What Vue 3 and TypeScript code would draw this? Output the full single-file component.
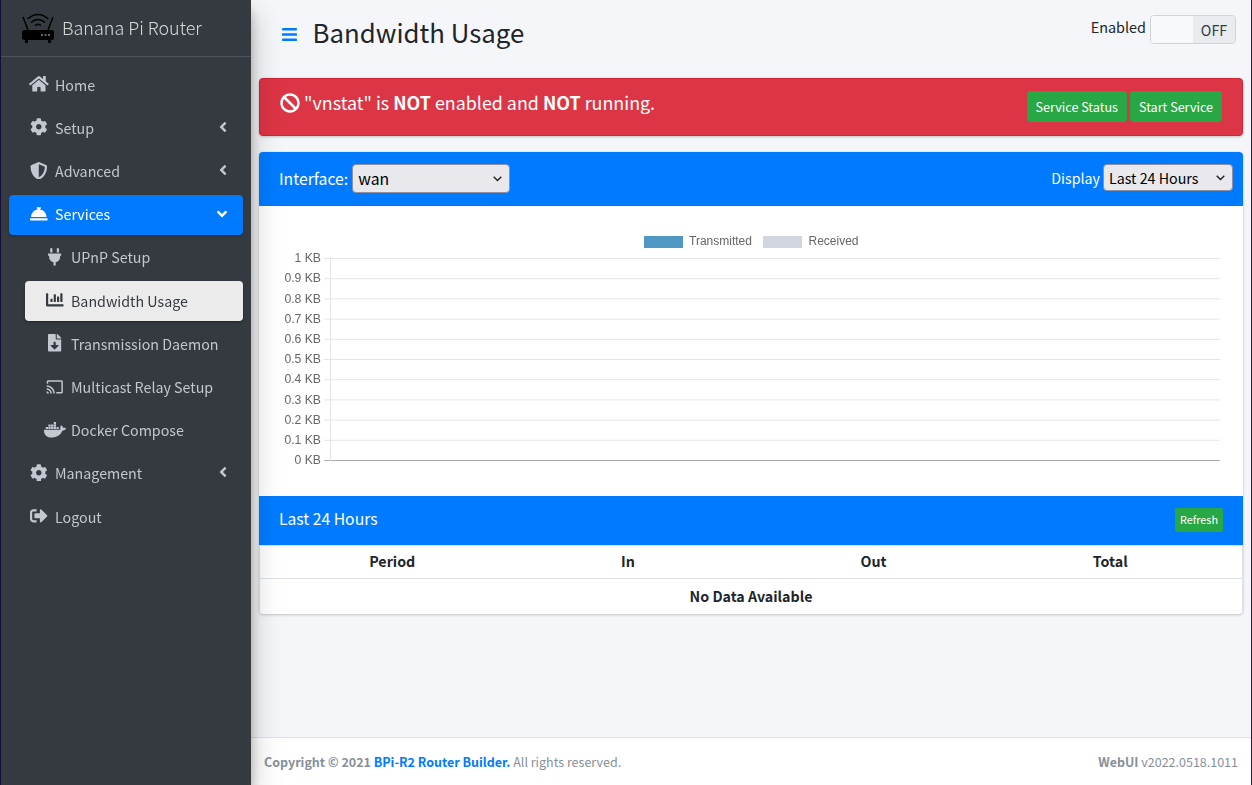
<script setup lang="ts">
import { computed } from 'vue'

const icons: Record<string, { box: string; d: string }> = {
  home: { box: '0 0 576 512', d: 'M280.37 148.26L96 300.11V464a16 16 0 0 0 16 16l112.06-.29a16 16 0 0 0 15.92-16V368a16 16 0 0 1 16-16h64a16 16 0 0 1 16 16v95.64a16 16 0 0 0 16 16.05L464 480a16 16 0 0 0 16-16V300L295.67 148.26a12.19 12.19 0 0 0-15.3 0zM571.6 251.47L488 182.56V44.05a12 12 0 0 0-12-12h-56a12 12 0 0 0-12 12v72.61L318.47 43a48 48 0 0 0-61 0L4.34 251.47a12 12 0 0 0-1.6 16.9l25.5 31A12 12 0 0 0 45.15 301l235.22-193.74a12.19 12.19 0 0 1 15.3 0L530.9 301a12 12 0 0 0 16.9-1.6l25.5-31a12 12 0 0 0-1.7-16.93z' },
  cog: { box: '0 0 512 512', d: 'M487.4 315.7l-42.6-24.6c4.3-23.2 4.3-47 0-70.2l42.6-24.6c4.9-2.8 7.1-8.6 5.5-14-11.1-35.6-30-67.8-54.7-94.6-3.8-4.1-10-5.1-14.8-2.3L380.8 110c-17.9-15.4-38.5-27.3-60.8-35.1V25.8c0-5.6-3.9-10.5-9.4-11.7-36.7-8.2-74.3-7.8-109.2 0-5.5 1.2-9.4 6.1-9.4 11.7V75c-22.2 7.9-42.8 19.8-60.8 35.1L88.7 85.5c-4.9-2.8-11-1.9-14.8 2.3-24.7 26.7-43.6 58.9-54.7 94.6-1.7 5.4.6 11.2 5.5 14L67.3 221c-4.3 23.2-4.3 47 0 70.2l-42.6 24.6c-4.9 2.8-7.1 8.6-5.5 14 11.1 35.6 30 67.8 54.7 94.6 3.8 4.1 10 5.1 14.8 2.3l42.6-24.6c17.9 15.4 38.5 27.3 60.8 35.1v49.2c0 5.6 3.9 10.5 9.4 11.7 36.7 8.2 74.3 7.8 109.2 0 5.5-1.2 9.4-6.1 9.4-11.7v-49.2c22.2-7.9 42.8-19.8 60.8-35.1l42.6 24.6c4.9 2.8 11 1.9 14.8-2.3 24.7-26.7 43.6-58.9 54.7-94.6 1.5-5.5-.7-11.3-5.6-14.1zM256 336c-44.1 0-80-35.9-80-80s35.9-80 80-80 80 35.9 80 80-35.9 80-80 80z' },
  shield: { box: '0 0 512 512', d: 'M466.5 83.7l-192-80a48.15 48.15 0 0 0-36.9 0l-192 80C27.7 91.1 16 108.6 16 128c0 198.5 114.5 335.7 221.5 380.3 11.8 4.9 25.1 4.9 36.9 0C360.1 472.6 496 349.3 496 128c0-19.4-11.7-36.9-29.5-44.3zM256.1 446.3l-.1-381 175.9 73.3c-3.3 151.4-82.1 261.1-175.8 307.7z' },
  bell: { box: '0 0 512 512', d: 'M288 130.54V112h16c8.84 0 16-7.16 16-16V80c0-8.84-7.16-16-16-16h-96c-8.84 0-16 7.16-16 16v16c0 8.84 7.16 16 16 16h16v18.54C115.49 146.11 32 239.18 32 352h448c0-112.82-83.49-205.89-192-221.46zM496 384H16c-8.84 0-16 7.16-16 16v32c0 8.84 7.16 16 16 16h480c8.84 0 16-7.16 16-16v-32c0-8.84-7.16-16-16-16z' },
  plug: { box: '0 0 384 512', d: 'M320 32a32 32 0 0 0-64 0v96h64Zm48 128H16A16 16 0 0 0 0 176v32a16 16 0 0 0 16 16H32v32A160.07 160.07 0 0 0 160 412.8V512h64V412.8A160.07 160.07 0 0 0 352 256V224h16a16 16 0 0 0 16-16V176A16 16 0 0 0 368 160ZM128 32a32 32 0 0 0-64 0v96h64Z' },
  chart: { box: '0 0 512 512', d: 'M332.8 320h38.4c6.4 0 12.8-6.4 12.8-12.8V172.8c0-6.4-6.4-12.8-12.8-12.8h-38.4c-6.4 0-12.8 6.4-12.8 12.8v134.4c0 6.4 6.4 12.8 12.8 12.8zm96 0h38.4c6.4 0 12.8-6.4 12.8-12.8V76.8c0-6.4-6.4-12.8-12.8-12.8h-38.4c-6.4 0-12.8 6.4-12.8 12.8v230.4c0 6.4 6.4 12.8 12.8 12.8zm-288 0h38.4c6.4 0 12.8-6.4 12.8-12.8v-70.4c0-6.4-6.4-12.8-12.8-12.8h-38.4c-6.4 0-12.8 6.4-12.8 12.8v70.4c0 6.4 6.4 12.8 12.8 12.8zm96 0h38.4c6.4 0 12.8-6.4 12.8-12.8V108.8c0-6.4-6.4-12.8-12.8-12.8h-38.4c-6.4 0-12.8 6.4-12.8 12.8v198.4c0 6.4 6.4 12.8 12.8 12.8zM496 384H64V80c0-8.84-7.16-16-16-16H16C7.16 64 0 71.16 0 80v336c0 17.67 14.33 32 32 32h464c8.84 0 16-7.16 16-16v-32c0-8.84-7.16-16-16-16z' },
  file: { box: '0 0 384 512', d: 'M224 136V0H24C10.7 0 0 10.7 0 24v464c0 13.3 10.7 24 24 24h336c13.3 0 24-10.7 24-24V160H248c-13.2 0-24-10.8-24-24zm76.45 211.36l-96.42 95.7c-6.65 6.61-17.39 6.61-24.04 0l-96.42-95.7C73.42 337.29 80.54 320 94.82 320H160v-80c0-8.84 7.16-16 16-16h32c8.84 0 16 7.16 16 16v80h65.18c14.28 0 21.4 17.29 11.27 27.36zM377 105L279.1 7c-4.5-4.5-10.6-7-17-7H256v128h128v-6.1c0-6.3-2.5-12.4-7-16.9z' },
  cast: { box: '0 0 512 512', d: 'M447.8 64H64c-23.6 0-42.7 19.1-42.7 42.7v63.9H64v-63.9h383.8v298.6H298.6V448H448c23.6 0 42.7-19.1 42.7-42.7V106.7C490.7 83.1 471.4 64 447.8 64zM21.3 383.6v63.9h63.9c0-35.3-28.6-63.9-63.9-63.9zm0-85V341c58.9 0 106.6 48.1 106.6 107h42.7c.1-82.4-66.9-149.3-149.3-149.4zm192.1 149.4h42.7c-.5-129.5-105.3-234.3-234.8-234.6v42.4c106 -.2 192 86.2 192.1 192.2z' },
  docker: { box: '0 0 640 512', d: 'M349.9 236.3h-66.1v-59.4h66.1v59.4zm0-204.3h-66.1v60.7h66.1V32zm78.2 144.8H362v59.4h66.1v-59.4zm-156.3-72.1h-66.1v60.1h66.1v-60.1zm78.1 0h-66.1v60.1h66.1v-60.1zm276.8 100c-14.4-9.7-47.6-13.2-73.1-8.4-3.3-24-16.7-44.9-41.1-63.7l-14-9.3-9.3 14c-18.4 27.8-23.4 73.6-3.7 103.8-8.7 4.7-25.8 11.1-48.4 10.7H2.4c-8.7 50.8 5.8 116.8 44 162.1 37.1 43.9 92.7 66.2 165.4 66.2 157.4 0 273.9-72.5 328.4-204.2 21.4.4 67.6.1 91.3-45.2 1.5-2.5 6.6-13.2 8.5-17.1l-13.3-8.9zm-511.1-27.9h-66v59.4h66.1v-59.4zm78.1 0h-66.1v59.4h66.1v-59.4zm78.1 0h-66.1v59.4h66.1v-59.4zm-78.1-72.1h-66.1v60.1h66.1v-60.1z' },
  logout: { box: '0 0 512 512', d: 'M497 273L329 441c-15 15-41 4.5-41-17v-96H152c-13.3 0-24-10.7-24-24v-96c0-13.3 10.7-24 24-24h136V88c0-21.4 25.9-32 41-17l168 168c9.3 9.4 9.3 24.6 0 34zM192 436v-40c0-6.6-5.4-12-12-12H96c-17.7 0-32-14.3-32-32V160c0-17.7 14.3-32 32-32h84c6.6 0 12-5.4 12-12V76c0-6.6-5.4-12-12-12H96c-53 0-96 43-96 96v192c0 53 43 96 96 96h84c6.6 0 12-5.4 12-12z' },
}

const angleLeft = 'M31.7 239l136-136c9.4-9.4 24.6-9.4 33.9 0l22.6 22.6c9.4 9.4 9.4 24.6 0 33.9L127.9 256l96.4 96.4c9.4 9.4 9.4 24.6 0 33.9L201.7 409c-9.4 9.4-24.6 9.4-33.9 0l-136-136c-9.5-9.4-9.5-24.6-.1-34z'
const angleDown = 'M143 352.3L7 216.3c-9.4-9.4-9.4-24.6 0-33.9l22.6-22.6c9.4-9.4 24.6-9.4 33.9 0l96.4 96.4 96.4-96.4c9.4-9.4 24.6-9.4 33.9 0l22.6 22.6c9.4 9.4 9.4 24.6 0 33.9l-136 136c-9.2 9.4-24.4 9.4-33.8 0z'

type NavItem = { label: string; icon: string; arrow?: 'left' | 'down'; sub?: boolean; active?: boolean; current?: boolean }

const nav: NavItem[] = [
  { label: 'Home', icon: 'home' },
  { label: 'Setup', icon: 'cog', arrow: 'left' },
  { label: 'Advanced', icon: 'shield', arrow: 'left' },
  { label: 'Services', icon: 'bell', arrow: 'down', active: true },
  { label: 'UPnP Setup', icon: 'plug', sub: true },
  { label: 'Bandwidth Usage', icon: 'chart', sub: true, current: true },
  { label: 'Transmission Daemon', icon: 'file', sub: true },
  { label: 'Multicast Relay Setup', icon: 'cast', sub: true },
  { label: 'Docker Compose', icon: 'docker', sub: true },
  { label: 'Management', icon: 'cog', arrow: 'left' },
  { label: 'Logout', icon: 'logout' },
]

// y axis of the empty traffic chart
const ticks = computed(() =>
  ['1 KB', '0.9 KB', '0.8 KB', '0.7 KB', '0.6 KB', '0.5 KB', '0.4 KB', '0.3 KB', '0.2 KB', '0.1 KB', '0 KB'].map((label, i) => ({
    label,
    y: 52.5 + i * 20.2,
  })),
)
</script>

<template>
  <div class="page">
    <aside class="sidebar">
      <div class="brand">
        <svg class="logo" viewBox="0 0 32 30" fill="none">
          <path d="M6 17 1 4M26 17l5-13" stroke="#000" stroke-width="1.5" />
          <path d="M5.5 6Q16-3 26.5 6M9 9.5Q16 3.5 23 9.5M13 12.6Q16 10 19 12.6" stroke="#000" stroke-width="1.5" />
          <rect x="0" y="17" width="32" height="10" rx="2.5" fill="#000" />
          <path d="M3 27h3v3H3zM26 27h3v3h-3z" fill="#000" />
          <path d="M19 21h2v2h-2zM22.5 21h2v2h-2zM26 21h2v2h-2z" fill="#666" />
        </svg>
        <span class="brand-text">Banana Pi Router</span>
      </div>
      <nav class="nav">
        <a
          v-for="item in nav"
          :key="item.label"
          class="nav-link"
          :class="{ sub: item.sub, active: item.active, current: item.current }"
        >
          <span class="nav-icon">
            <svg :viewBox="icons[item.icon].box" :class="'i-' + item.icon"><path :d="icons[item.icon].d" /></svg>
          </span>
          <span class="nav-label">{{ item.label }}</span>
          <svg v-if="item.arrow === 'left'" class="arrow" viewBox="0 0 256 512"><path :d="angleLeft" /></svg>
          <svg v-if="item.arrow === 'down'" class="arrow down" viewBox="0 0 320 512"><path :d="angleDown" /></svg>
        </a>
      </nav>
    </aside>

    <div class="main">
      <div class="content">
        <header class="topbar">
          <svg class="burger" viewBox="0 0 448 512"><path d="M16 132h416c8.837 0 16-7.163 16-16V76c0-8.837-7.163-16-16-16H16C7.163 60 0 67.163 0 76v40c0 8.837 7.163 16 16 16zm0 160h416c8.837 0 16-7.163 16-16v-40c0-8.837-7.163-16-16-16H16c-8.837 0-16 7.163-16 16v40c0 8.837 7.163 16 16 16zm0 160h416c8.837 0 16-7.163 16-16v-40c0-8.837-7.163-16-16-16H16c-8.837 0-16 7.163-16 16v40c0 8.837 7.163 16 16 16z" /></svg>
          <h1>Bandwidth Usage</h1>
          <div class="enabled">
            <span class="enabled-label">Enabled</span>
            <div class="toggle"><span class="toggle-blank"></span><span class="toggle-off">OFF</span></div>
          </div>
        </header>

        <div class="alert">
          <p class="alert-text">
            <svg class="ban" viewBox="0 0 512 512"><path d="M256 8C119.034 8 8 119.033 8 256s111.034 248 248 248 248-111.034 248-248S392.967 8 256 8zm130.108 117.892c65.448 65.448 70 165.481 20.677 235.637L150.47 105.216c70.204-49.356 170.226-44.735 235.638 20.676zM125.892 386.108c-65.448-65.448-70-165.481-20.677-235.637L361.53 406.784c-70.203 49.356-170.226 44.736-235.638-20.676z" /></svg>
            "vnstat" is <b>NOT</b> enabled and <b>NOT</b> running.
          </p>
          <div class="alert-btns">
            <button class="btn">Service Status</button>
            <button class="btn">Start Service</button>
          </div>
        </div>

        <section class="card">
          <div class="card-head graph-head">
            <label class="field">Interface: <select class="sel sel-if"><option>wan</option></select></label>
            <label class="field small">Display <select class="sel sel-range"><option>Last 24 Hours</option></select></label>
          </div>
          <div class="chart-wrap">
            <svg class="chart" viewBox="0 0 983 290">
              <rect x="385" y="30" width="39" height="12" fill="#4f98c3" />
              <text x="430" y="39" class="legend">Transmitted</text>
              <rect x="504" y="30" width="39" height="12" fill="#d2d6de" />
              <text x="549.5" y="39" class="legend">Received</text>
              <g v-for="t in ticks" :key="t.label">
                <line x1="65" :x2="961" :y1="t.y" :y2="t.y" :stroke="t.label === '0 KB' ? '#aaa' : '#e5e5e5'" />
                <text x="62" :y="t.y + 3.6" class="tick" text-anchor="end">{{ t.label }}</text>
              </g>
              <line x1="71.5" x2="71.5" y1="52" y2="255" stroke="#e5e5e5" />
            </svg>
          </div>
          <div class="card-head table-head">
            <span class="table-title">Last 24 Hours</span>
            <button class="btn btn-xs">Refresh</button>
          </div>
          <table class="tbl">
            <thead>
              <tr><th class="c1">Period</th><th class="c2">In</th><th class="c3">Out</th><th class="c4">Total</th></tr>
            </thead>
            <tbody>
              <tr><td colspan="4">No Data Available</td></tr>
            </tbody>
          </table>
        </section>
      </div>

      <footer class="footer">
        <span><b>Copyright © 2021 <a>BPi-R2 Router Builder.</a></b> All rights reserved.</span>
        <span><b>WebUI</b> v2022.0518.1011</span>
      </footer>
    </div>
  </div>
</template>

<style>
html, body { margin: 0; background: #f4f6f9; }
</style>

<style scoped>
* { box-sizing: border-box; }

.page {
  display: flex;
  width: 1252px;
  height: 785px;
  overflow: hidden;
  font-family: "Noto Sans CJK SC", "Liberation Sans", sans-serif;
  font-size: 14.25px;
  color: #212529;
  border-left: 1px solid #14103a;
  border-right: 1px solid #3a0d6e;
}

.sidebar {
  width: 250px;
  flex: none;
  background: #343a40;
  box-shadow: 0 14px 28px rgba(0, 0, 0, .25), 0 10px 10px rgba(0, 0, 0, .22);
  position: relative;
  z-index: 2;
}

.brand {
  height: 57px;
  display: flex;
  align-items: center;
  border-bottom: 1px solid #4b545c;
  padding: 0 0 4px 21px;
}

.logo { width: 32px; height: 30px; margin-right: 8px; margin-top: 3px; flex: none; }

.brand-text {
  font-size: 17.95px;
  line-height: 28px;
  font-weight: 300;
  color: rgba(255, 255, 255, .8);
  margin-top: 1px;
}

.nav { padding: 8px 8px 0; display: flex; flex-direction: column; gap: 3.2px; }

.nav-link {
  display: flex;
  align-items: center;
  height: 40px;
  padding: 0 16px 0 20px;
  border-radius: 4px;
  color: #c2c7d0;
  fill: #c2c7d0;
  line-height: 24px;
}

.nav-link.sub { margin-left: 16px; }

.nav-link.active { background: #007bff; color: #fff; fill: #fff; box-shadow: 0 1px 3px rgba(0, 0, 0, .12), 0 1px 2px rgba(0, 0, 0, .24); }

.nav-link.current { background: rgba(255, 255, 255, .9); color: #343a40; fill: #343a40; box-shadow: 0 1px 3px rgba(0, 0, 0, .12), 0 1px 2px rgba(0, 0, 0, .24); }

.nav-icon { width: 20px; margin: -2px 6px 0 0; display: flex; justify-content: center; flex: none; }

.nav-icon svg { height: 17.6px; width: 17.6px; flex: none; display: block; }
.nav-icon .i-home { width: 19.8px; }
.nav-icon .i-plug, .nav-icon .i-file { width: 13.2px; }
.nav-icon .i-docker { width: 22px; }

.nav-label { flex: 1; white-space: nowrap; margin-top: -.6px; }

.arrow { width: 8px; height: 16px; flex: none; margin: -3px 0 0 0; }
.arrow.down { width: 10px; margin: -2px 0 0 0; }

.main { flex: 1; min-width: 0; display: flex; flex-direction: column; }

.content { flex: 1; padding: 0 8px; min-height: 0; }

.topbar { display: flex; align-items: flex-start; height: 78px; }

.burger { width: 15px; height: 17px; fill: #007bff; margin: 26px 0 0 23px; flex: none; }

h1 {
  margin: 14px 0 0 15.5px;
  font-size: 25.8px;
  font-weight: 400;
  line-height: 36px;
  color: #212529;
}

.enabled { margin-left: auto; margin-right: 7px; display: flex; align-items: flex-start; padding-top: 15px; }

.enabled-label { font-size: 14.4px; line-height: 24px; margin-right: 4px; }

.toggle {
  width: 86px;
  height: 29px;
  display: flex;
  border: 1px solid #ced4da;
  border-radius: 4px;
  overflow: hidden;
}

.toggle-blank { width: 42px; background: #f8f9fa; }

.toggle-off { flex: 1; background: #e9ecef; text-align: center; line-height: 27px; color: #343a40; }

.alert {
  height: 58px;
  background: #dc3545;
  border: 1px solid #d32535;
  border-radius: 4px;
  color: #fff;
  display: flex;
  justify-content: space-between;
  padding: 11px 20px 0;
  margin-bottom: 16px;
  box-shadow: 0 0 1px rgba(0, 0, 0, .125), 0 1px 3px rgba(0, 0, 0, .2);
}

.alert-text { margin: 0; font-size: 17.86px; line-height: 24px; white-space: nowrap; }

.ban { width: 20px; height: 20px; fill: #fff; vertical-align: -3px; }

.alert-btns { display: flex; gap: 3px; align-items: flex-start; margin-top: 1px; }

.btn {
  font: inherit;
  font-size: 12.6px;
  line-height: 20px;
  color: #fff;
  background: #28a745;
  border: 1px solid #28a745;
  border-radius: 3px;
  height: 31px;
  padding: 0 8px;
}

.card {
  background: #fff;
  border-radius: 4px;
  box-shadow: 0 0 1px rgba(0, 0, 0, .125), 0 1px 3px rgba(0, 0, 0, .2);
  overflow: hidden;
}

.card-head { background: #007bff; color: #fff; display: flex; justify-content: space-between; align-items: center; }

.graph-head { height: 54px; padding: 0 10px 0 20px; }

.field { font-size: 15.75px; display: flex; align-items: center; gap: 4px; margin-top: -1px; }
.field.small { font-size: 14.25px; margin-top: -3px; gap: 3px; }

.sel {
  appearance: none;
  font-family: inherit;
  font-size: 15.75px;
  height: 29px;
  color: #000;
  border: 1px solid #8f8f9d;
  border-radius: 4px;
  padding: 0 0 0 5px;
  background: #e9e9ed url("data:image/svg+xml,%3Csvg xmlns='http://www.w3.org/2000/svg' width='9' height='6' fill='none'%3E%3Cpath d='M.7.8 4.5 4.6 8.3.8' stroke='%23222' stroke-width='1.4'/%3E%3C/svg%3E") no-repeat right 7px center;
}

.sel-if { width: 158px; }
.sel-range { width: 130px; height: 27px; font-size: 14.25px; }

.chart-wrap { height: 290px; }
.chart { width: 983px; height: 290px; display: block; will-change: transform; }

.legend { font: 12px "Liberation Sans", Arial, sans-serif; fill: #666; }
.tick { font: 12.2px "Liberation Sans", Arial, sans-serif; fill: #666; }

.table-head { height: 49px; padding: 0 20px; }
.table-title { font-size: 15.7px; margin-top: -4px; }

.btn-xs { font-size: 10.85px; height: 24px; width: 48px; line-height: 18px; padding: 0 0 2px; border-radius: 2px; margin-top: -1px; }

.tbl { width: 100%; border-collapse: collapse; font-size: 14.25px; table-layout: fixed; border: 1px solid #dee2e6; border-bottom: 0; }
.tbl th { height: 33px; border-bottom: 1px solid #dee2e6; font-weight: 700; padding: 0 0 2px; text-align: center; line-height: 24px; }
.tbl td { height: 35px; text-align: center; font-weight: 700; padding: 0 0 2px; }
.c1 { width: 265px; }
.c2 { width: 207px; }
.c3 { width: 284px; }
.c4 { padding-right: 37px !important; }

.footer {
  height: 48px;
  flex: none;
  background: #fff;
  border-top: 1px solid #dee2e6;
  display: flex;
  justify-content: space-between;
  align-items: center;
  padding: 0 13px 0 13px;
  color: #869099;
  font-size: 12.5px;
}

.footer a { color: #007bff; }
</style>
